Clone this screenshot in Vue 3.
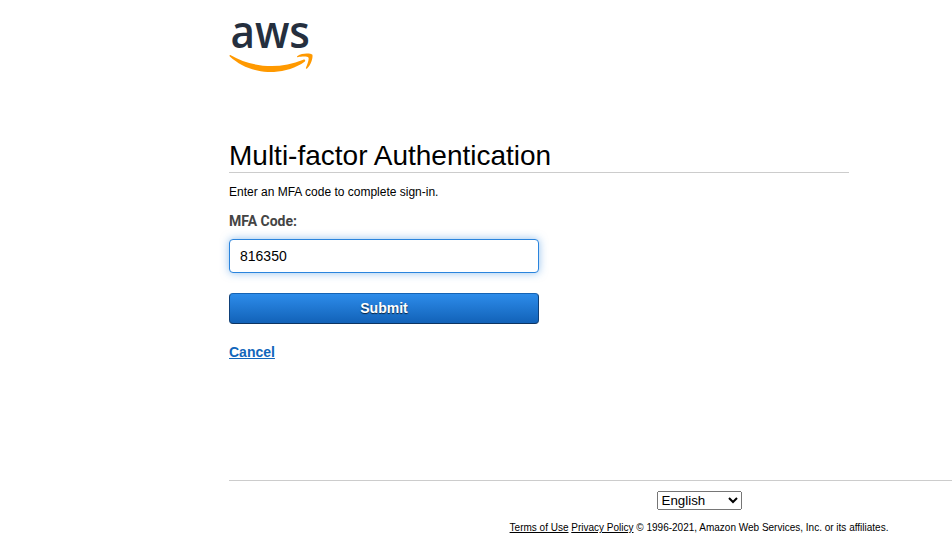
<script setup>
import { ref } from 'vue'

const code = ref('816350')
const language = ref('English')
</script>

<template>
  <div class="page">
    <header class="brand">
      <svg class="logo" viewBox="0 -80 304 262" role="img" aria-label="aws">
        <text class="word" x="5" y="93" textLength="288" lengthAdjust="spacingAndGlyphs">aws</text>
        <path class="smile" d="M273.5,143.7c-32.9,24.3-80.7,37.2-121.8,37.2c-57.6,0-109.5-21.3-148.7-56.7c-3.1-2.8-0.3-6.6,3.4-4.4c42.4,24.6,94.7,39.5,148.8,39.5c36.5,0,76.6-7.6,113.5-23.2C274.2,133.6,278.9,139.7,273.5,143.7z" />
        <path class="smile" d="M287.2,128.1c-4.2-5.4-27.8-2.6-38.5-1.3c-3.2,0.4-3.7-2.4-0.8-4.5c18.8-13.2,49.7-9.4,53.3-5c3.6,4.5-1,35.4-18.6,50.2c-2.7,2.3-5.3,1.1-4.1-1.9C282.5,155.7,291.4,133.4,287.2,128.1z" />
      </svg>
    </header>
    <main class="content">
      <h1>Multi-factor Authentication</h1>
      <p class="intro">Enter an MFA code to complete sign-in.</p>
      <form class="form" @submit.prevent>
        <label for="mfa">MFA Code:</label>
        <input id="mfa" v-model="code" type="text" autocomplete="off" />
        <button type="submit">Submit</button>
        <a class="cancel" href="#">Cancel</a>
      </form>
    </main>
    <footer class="footer">
      <select v-model="language">
        <option>English</option>
      </select>
      <p class="legal"><a href="#">Terms of Use</a> <a href="#">Privacy Policy</a> © 1996-2021, Amazon Web Services, Inc. or its affiliates.</p>
    </footer>
  </div>
</template>

<style>
body {
  background: #fff;
}
</style>

<style scoped>
.page {
  box-sizing: border-box;
  width: 100%;
  height: 552px;
  padding-left: 229px;
  display: flex;
  flex-direction: column;
  overflow: hidden;
  color: #000;
  font-family: "Liberation Sans", Arial, sans-serif;
}
.brand {
  height: 139px;
}
.logo {
  display: block;
  width: 84px;
  height: 72.4px;
  margin-left: -0.5px;
}
.word {
  font: 600 163px "Open Sans", "Noto Sans", sans-serif;
  fill: #252f3e;
}
.smile {
  fill: #f90;
}
.content {
  width: 620px;
  height: 341px;
}
h1 {
  box-sizing: border-box;
  height: 34px;
  margin: 0;
  border-bottom: 1px solid #ccc;
  font-size: 28px;
  font-weight: 400;
  line-height: 33px;
}
.intro {
  margin: 11px 0 0;
  font-size: 12px;
  line-height: 16px;
}
.form {
  width: 310px;
  display: flex;
  flex-direction: column;
  align-items: flex-start;
}
label {
  margin-top: 13px;
  color: #444;
  font: 700 14px/16px Roboto, sans-serif;
}
input {
  box-sizing: border-box;
  width: 310px;
  height: 34px;
  margin: 10px 0 0;
  padding: 0 10px;
  border: 1px solid #2a84dd;
  border-radius: 4px;
  outline: none;
  box-shadow: 0 0 8px rgba(42, 132, 221, 0.5);
  color: #000;
  font: 14px "Liberation Sans", Arial, sans-serif;
}
button {
  box-sizing: border-box;
  width: 310px;
  height: 31px;
  margin: 20px 0 0;
  padding: 0;
  border: 1px solid;
  border-color: #1563b4 #0f4078 #0d3461 #0f4078;
  border-radius: 4px;
  background: linear-gradient(#2d8cea, #1262b8);
  color: #fff;
  font: 700 14px/29px "Liberation Sans", Arial, sans-serif;
  text-shadow: 0 1px 1px rgba(0, 0, 0, 0.7);
}
.cancel {
  margin-top: 20px;
  color: #1166bb;
  font-size: 14px;
  font-weight: 700;
  line-height: 16px;
  text-decoration: underline;
}
.footer {
  width: 940px;
  border-top: 1px solid #ccc;
  display: flex;
  flex-direction: column;
  align-items: center;
}
select {
  box-sizing: border-box;
  width: 85px;
  height: 19px;
  margin-top: 10px;
  font: 13.333px "Liberation Sans", Arial, sans-serif;
}
.legal {
  margin: 12px 0 0;
  font-size: 10px;
  line-height: 12px;
}
.legal a {
  color: #000;
}
</style>
